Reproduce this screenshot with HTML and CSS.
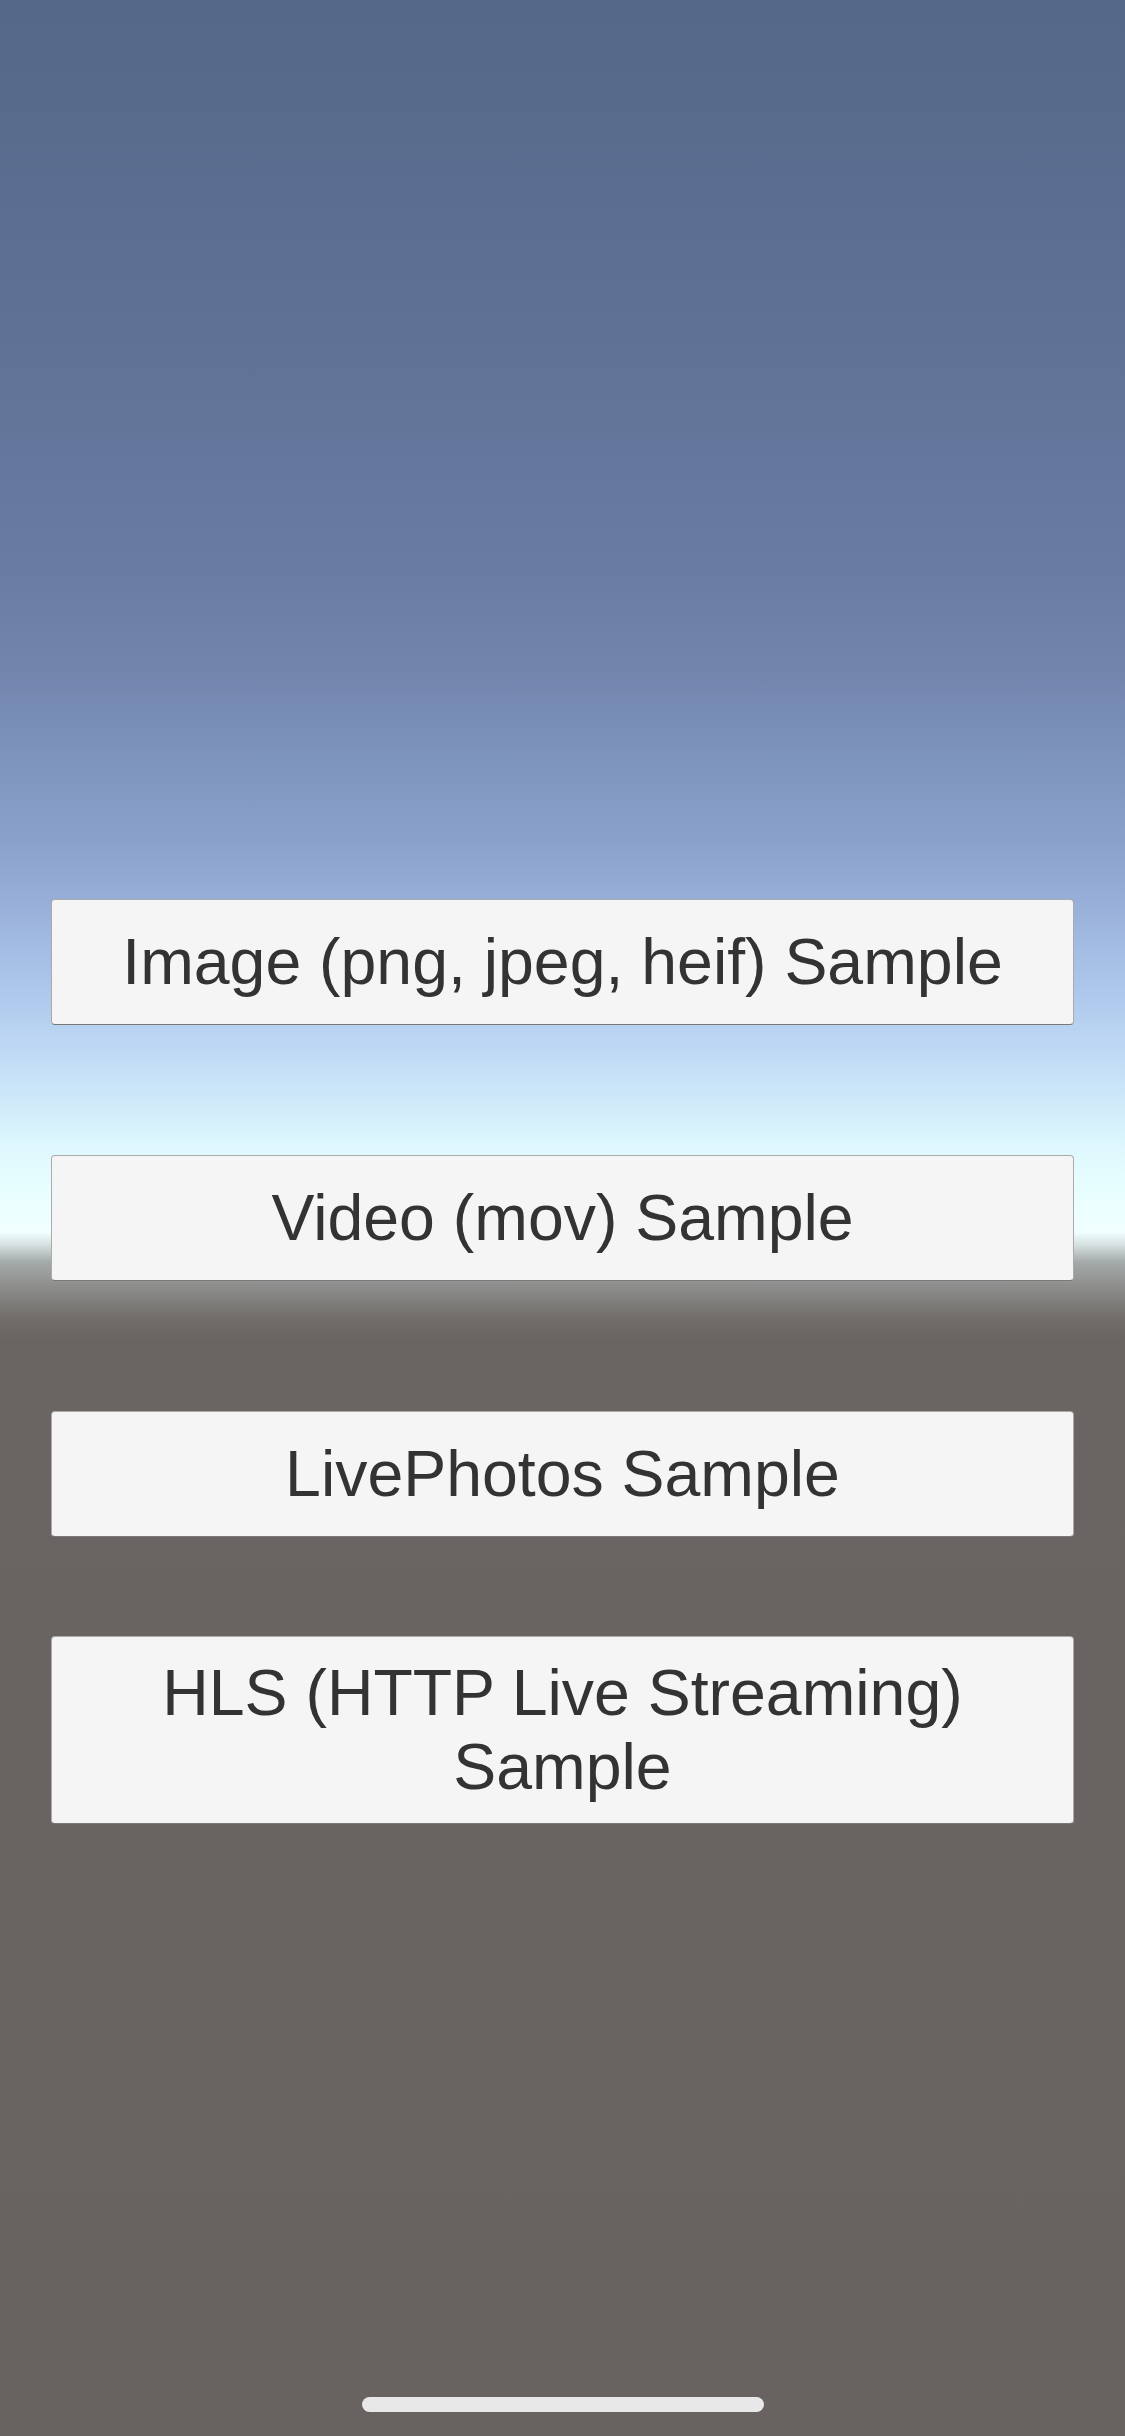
FILE: index.html
```html
<!DOCTYPE html>
<html lang="en">
<head>
<meta charset="utf-8">
<title>Samples</title>
<link rel="stylesheet" href="styles.css">
</head>
<body>
<main class="screen">
  <div class="menu">
    <button class="btn">Image (png, jpeg, heif) Sample</button>
    <button class="btn">Video (mov) Sample</button>
    <button class="btn">LivePhotos Sample</button>
    <button class="btn btn-tall">HLS (HTTP Live Streaming)<br>Sample</button>
  </div>
  <div class="home-indicator"></div>
</main>
</body>
</html>
```
FILE: styles.css
```css
html, body {
  margin: 0;
  padding: 0;
}
body {
  width: 1125px;
  height: 2436px;
  overflow: hidden;
  font-family: "Liberation Sans", Arial, sans-serif;
}
.screen {
  width: 1125px;
  height: 2436px;
  display: flex;
  flex-direction: column;
  box-sizing: border-box;
  padding: 899px 51px 24px;
  background: linear-gradient(to bottom,
    #566889 0px,
    #5b6d90 200px,
    #5f7194 320px,
    #64769b 450px,
    #6a7ca4 580px,
    #7386ae 680px,
    #7f96bf 770px,
    #8aa2cb 840px,
    #97afd8 900px,
    #b0caee 1000px,
    #c8e2f8 1080px,
    #dcf6fd 1140px,
    #e8ffff 1190px,
    #f0ffff 1232px,
    #d6e0e0 1245px,
    #a4aaaa 1262px,
    #8a8a88 1290px,
    #716d6a 1318px,
    #6a6562 1340px,
    #686360 2436px);
}
.menu {
  display: flex;
  flex-direction: column;
}
.btn {
  height: 126px;
  margin: 0 0 130px;
  padding: 0;
  border: 1px solid rgba(110, 110, 110, 0.55);
  border-bottom-color: rgba(90, 90, 90, 0.8);
  border-radius: 4px;
  background: #f5f5f5;
  color: #333333;
  font-family: "Liberation Sans", Arial, sans-serif;
  font-size: 64.4px;
  line-height: 74px;
  text-align: center;
  display: flex;
  align-items: center;
  justify-content: center;
  box-sizing: border-box;
}
.btn:nth-child(3) {
  margin-bottom: 99px;
}
.btn-tall {
  height: 188px;
  margin-bottom: 0;
}
.home-indicator {
  margin: auto auto 0;
  width: 402px;
  height: 15px;
  border-radius: 8px;
  background: #e8e8e8;
}
```
